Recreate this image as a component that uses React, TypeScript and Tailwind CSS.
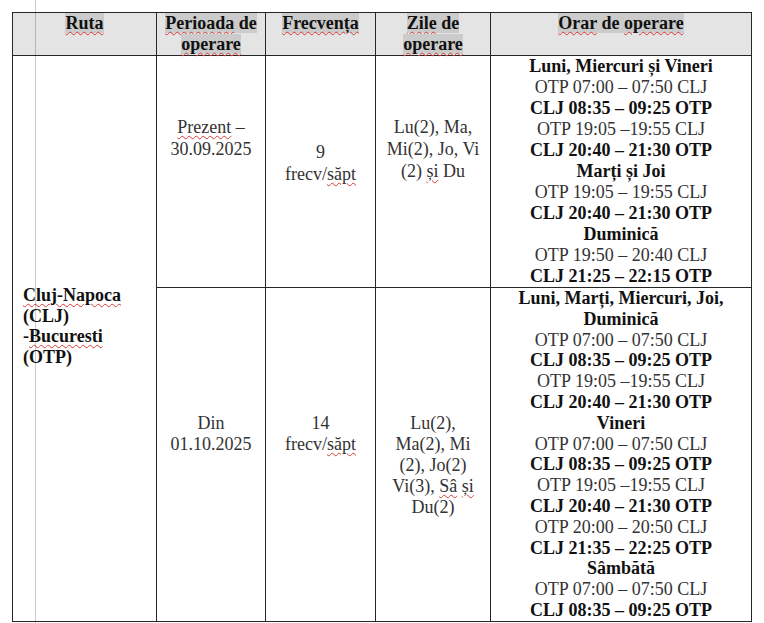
import React from "react";

const wavy = "underline decoration-wavy decoration-[#d93a3a] decoration-1 underline-offset-[2px]";
const cell = "border border-[#262626] p-0 align-top";

type Line = { t: string; b?: boolean };

const row1: Line[] = [
	{ t: "Luni, Miercuri și Vineri", b: true },
	{ t: "OTP 07:00 – 07:50 CLJ" },
	{ t: "CLJ 08:35 – 09:25 OTP", b: true },
	{ t: "OTP 19:05 –19:55 CLJ" },
	{ t: "CLJ 20:40 – 21:30 OTP", b: true },
	{ t: "Marți și Joi", b: true },
	{ t: "OTP 19:05 – 19:55 CLJ" },
	{ t: "CLJ 20:40 – 21:30 OTP", b: true },
	{ t: "Duminică", b: true },
	{ t: "OTP 19:50 – 20:40 CLJ" },
	{ t: "CLJ 21:25 – 22:15 OTP", b: true },
];

const row2: Line[] = [
	{ t: "Luni, Marți, Miercuri, Joi,", b: true },
	{ t: "Duminică", b: true },
	{ t: "OTP 07:00 – 07:50 CLJ" },
	{ t: "CLJ 08:35 – 09:25 OTP", b: true },
	{ t: "OTP 19:05 –19:55 CLJ" },
	{ t: "CLJ 20:40 – 21:30 OTP", b: true },
	{ t: "Vineri", b: true },
	{ t: "OTP 07:00 – 07:50 CLJ" },
	{ t: "CLJ 08:35 – 09:25 OTP", b: true },
	{ t: "OTP 19:05 –19:55 CLJ" },
	{ t: "CLJ 20:40 – 21:30 OTP", b: true },
	{ t: "OTP 20:00 – 20:50 CLJ" },
	{ t: "CLJ 21:35 – 22:25 OTP", b: true },
	{ t: "Sâmbătă", b: true },
	{ t: "OTP 07:00 – 07:50 CLJ" },
	{ t: "CLJ 08:35 – 09:25 OTP", b: true },
];

const Schedule = ({ lines, lh }: { lines: Line[]; lh: string }) => (
	<div className={"text-center " + lh}>
		{lines.map((l, i) => (
			<div
				key={i}
				className={l.b ? "font-bold text-[#111]" : "text-[#333]"}
			>
				{l.t}
			</div>
		))}
	</div>
);

const Head = ({ children }: { children: React.ReactNode }) => (
	<th className={cell + " bg-[#e4e4e4] text-center font-bold leading-[21px] text-[#111]"}>
		<span className="bg-[#cbcbcb] [box-decoration-break:clone]">{children}</span>
	</th>
);

export default function App() {
	return (
		<div className="relative w-[764px] h-[623px] bg-white overflow-hidden text-[18px] font-['Liberation_Serif','Times_New_Roman',serif]">
			<table className="mt-[12px] ml-[12px] w-[739px] table-fixed border-collapse">
				<colgroup>
					<col className="w-[144px]" />
					<col className="w-[109px]" />
					<col className="w-[110px]" />
					<col className="w-[115px]" />
					<col className="w-[261px]" />
				</colgroup>
				<thead>
					<tr>
						<Head>
							<span className={wavy}>Ruta</span>
						</Head>
						<Head>
							<span className={wavy}>Perioada</span> de
							<br />
							<span className={wavy}>operare</span>
						</Head>
						<Head>
							<span className={wavy}>Frecvența</span>
						</Head>
						<Head>
							<span className={wavy}>Zile</span> de
							<br />
							<span className={wavy}>operare</span>
						</Head>
						<Head>
							<span className={wavy}>Orar</span> de{" "}
							<span className={wavy}>operare</span>
						</Head>
					</tr>
				</thead>
				<tbody>
					<tr>
						<td
							rowSpan={2}
							className="border border-[#262626] p-0 align-middle pl-[10px] pb-[24px] font-bold leading-[20.5px] text-[#111]"
						>
							<div>
								<span className={wavy}>Cluj-Napoca</span>
							</div>
							<div>(CLJ)</div>
							<div>
								-<span className={wavy}>Bucuresti</span>
							</div>
							<div>(OTP)</div>
						</td>
						<td className={cell + " pt-[60px] text-center leading-[22px] text-[#333]"}>
							<div>
								<span className={wavy}>Prezent</span> –
							</div>
							<div>30.09.2025</div>
						</td>
						<td className={cell + " pt-[85px] text-center leading-[22px] text-[#333]"}>
							<div>9</div>
							<div>
								frecv/<span className={wavy}>săpt</span>
							</div>
						</td>
						<td className={cell + " pt-[60px] text-center leading-[22px] text-[#333]"}>
							<div>Lu(2), Ma,</div>
							<div>Mi(2), Jo, Vi</div>
							<div>
								(2) <span className={wavy}>și</span> Du
							</div>
						</td>
						<td className={cell}>
							<Schedule lines={row1} lh="leading-[21px]" />
						</td>
					</tr>
					<tr>
						<td className={cell + " pt-[125px] text-center leading-[21px] text-[#333]"}>
							<div>Din</div>
							<div>01.10.2025</div>
						</td>
						<td className={cell + " pt-[125px] text-center leading-[21px] text-[#333]"}>
							<div>14</div>
							<div>
								frecv/<span className={wavy}>săpt</span>
							</div>
						</td>
						<td className={cell + " pt-[125px] text-center leading-[21px] text-[#333]"}>
							<div>Lu(2),</div>
							<div>Ma(2), Mi</div>
							<div>(2), Jo(2)</div>
							<div>
								Vi(3), <span className={wavy}>Sâ</span>{" "}
								<span className={wavy}>și</span>
							</div>
							<div>Du(2)</div>
						</td>
						<td className={cell}>
							<Schedule lines={row2} lh="leading-[20.8px]" />
						</td>
					</tr>
				</tbody>
			</table>
			{/* page margin guide drawn by the editor */}
			<div className="pointer-events-none absolute left-[35px] top-0 h-full w-px bg-black/20" />
		</div>
	);
}
